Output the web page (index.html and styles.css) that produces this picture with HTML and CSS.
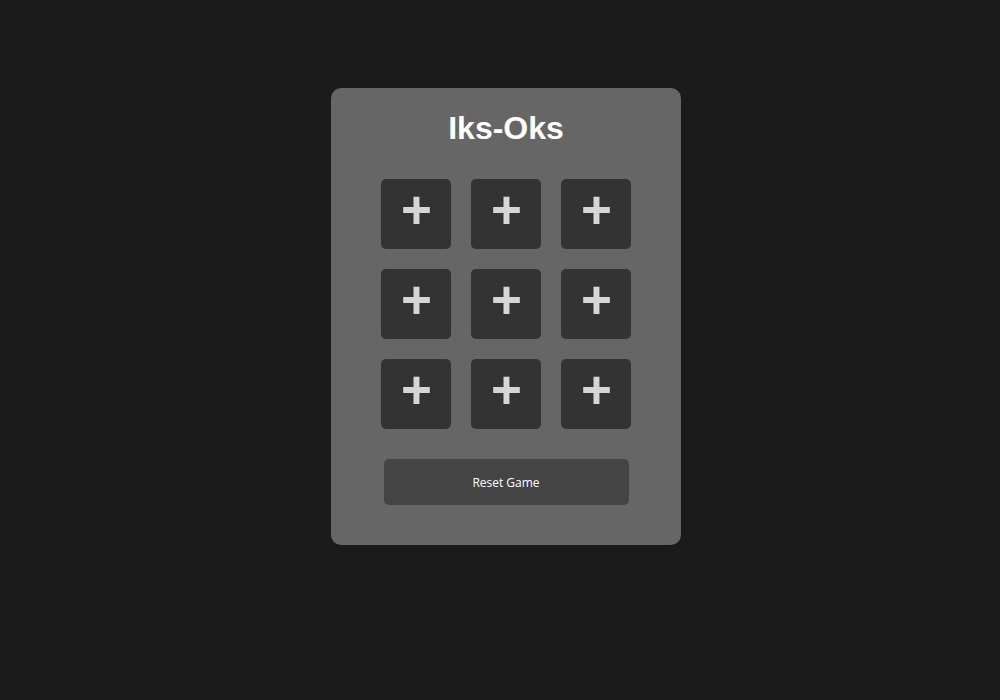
FILE: index.html
```html
<!DOCTYPE html>
<html lang="sr">
<head>
<meta charset="utf-8">
<title>Iks-Oks</title>
<link rel="stylesheet" href="styles.css">
</head>
<body>
<main class="card">
  <h1 class="title">Iks-Oks</h1>
  <div class="board">
    <button class="cell">+</button>
    <button class="cell">+</button>
    <button class="cell">+</button>
    <button class="cell">+</button>
    <button class="cell">+</button>
    <button class="cell">+</button>
    <button class="cell">+</button>
    <button class="cell">+</button>
    <button class="cell">+</button>
  </div>
  <button class="reset">Reset Game</button>
</main>
</body>
</html>
```
FILE: styles.css
```css
html, body {
  margin: 0;
  height: 100%;
}
body {
  background: #1c1b1c;
  display: flex;
  justify-content: center;
  align-items: flex-start;
  padding: 88px 0 0 12px;
  box-sizing: border-box;
  font-family: "Liberation Sans", Arial, sans-serif;
}
.card {
  width: 350px;
  box-sizing: border-box;
  background: #666666;
  border-radius: 10px;
  padding: 22px 50px 40px;
  display: flex;
  flex-direction: column;
  align-items: center;
}
.title {
  margin: 0;
  font-size: 32px;
  line-height: 37px;
  font-weight: bold;
  color: #ffffff;
}
.board {
  margin-top: 32px;
  display: grid;
  grid-template-columns: repeat(3, 70px);
  grid-auto-rows: 70px;
  gap: 20px;
}
.cell {
  border: none;
  margin: 0;
  padding: 0 0 8px 1px;
  box-sizing: border-box;
  background: #333333;
  border-radius: 5px;
  color: #d6d6d6;
  font-family: "Liberation Sans", Arial, sans-serif;
  font-weight: bold;
  font-size: 53px;
  line-height: 62px;
  display: flex;
  align-items: center;
  justify-content: center;
}
.reset {
  margin-top: 30px;
  width: 245px;
  height: 46px;
  border: none;
  border-radius: 5px;
  background: #444444;
  color: #ffffff;
  font-family: "Open Sans", "Noto Sans", sans-serif;
  font-size: 12px;
  padding: 0;
}
```
